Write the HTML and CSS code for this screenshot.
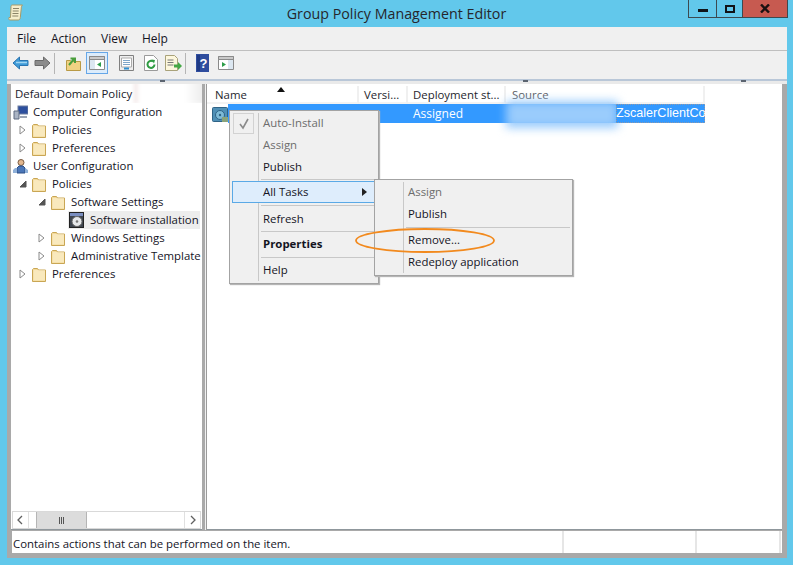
FILE: index.html
```html
<!DOCTYPE html>
<html lang="en">
<head>
<meta charset="utf-8">
<title>Group Policy Management Editor</title>
<link rel="stylesheet" href="styles.css">
</head>
<body>
<svg class="sprite" width="0" height="0" aria-hidden="true">
  <symbol id="folder" viewBox="0 0 14 15">
    <path d="M.5 14.500V2.500l1-1h4l1 1.500h7v11.500z" fill="#f3d998" stroke="#c9a654"/>
    <path d="M1.500 5h11.500v8.500H1.500z" fill="#f9e9bd"/>
    <path d="M1.500 4h11.500" stroke="#fff7df"/>
  </symbol>
  <symbol id="open" viewBox="0 0 8 10"><path d="M1 1l5 4-5 4z" fill="#fff" stroke="#8a8a8a"/></symbol>
  <symbol id="expanded" viewBox="0 0 8 10"><path d="M7 2v6H1z" fill="#555" stroke="#555"/></symbol>
</svg>
<div class="titlebar">
  <svg class="app-icon" width="16" height="17" viewBox="0 0 16 17"><path d="M3 2.500C3 1 4 1 5 1h9.500c-1 1-1.200 2-1.200 3l-1 9.500c0 1.500-1 2.500-2 2.500H2C1 16 .5 15 1 13.500h1.500z" fill="#f5eecb" stroke="#a89a66"/><path d="M5 4.500h6M4.700 7h6M4.500 9.500h6M4.300 12h6" stroke="#8a8468"/></svg>
  <div class="title">Group Policy Management Editor</div>
  <div class="caption">
    <div class="cap cap-min"><span class="min-glyph"></span></div>
    <div class="cap cap-max"><span class="max-glyph"></span></div>
    <div class="cap cap-close">
      <svg width="10" height="9" viewBox="0 0 10 9"><path d="M1 .5l8 8M9 .5l-8 8" stroke="#1b1111" stroke-width="2.400"/></svg>
    </div>
  </div>
</div>
<div class="frame">
  <div class="menubar">
    <span class="menu-file">File</span><span class="menu-action">Action</span><span class="menu-view">View</span><span>Help</span>
  </div>
  <div class="toolbar">
    <svg class="tb tb-back" width="17" height="14" viewBox="0 0 17 14"><path d="M1 7l6.500-6v3.500H16v5H7.500V13z" fill="#3f9bd8" stroke="#2a74b0"/><path d="M4 6.500h11" stroke="#9fd4f2" stroke-width="1.500"/></svg>
    <svg class="tb tb-fwd" width="17" height="14" viewBox="0 0 17 14"><path d="M16 7L9.500 1v3.500H1v5h8.500V13z" fill="#8c8c8c" stroke="#6a6a6a"/></svg>
    <span class="tb-sep tb-sep1"></span>
    <svg class="tb tb-up" width="15" height="15" viewBox="0 0 15 15"><path d="M.5 14.500V4.500h4l1 1h9v9z" fill="#f0d283" stroke="#b99a45"/><path d="M3 9l5-6M4.500 2.500H9V7" fill="none" stroke="#4a9e3c" stroke-width="2"/></svg>
    <span class="tb-active">
      <svg width="16" height="14" viewBox="0 0 16 14"><path d="M.5.500h15v13H.5z" fill="#fff" stroke="#8a8a8a"/><path d="M.5.500h15v3H.5z" fill="#c9c9c9" stroke="#8a8a8a"/><path d="M1 4h5v9H1z" fill="#dce7f1"/><path d="M12 6v5L8 8.500z" fill="#2d9d4a"/></svg>
    </span>
    <svg class="tb tb-props" width="15" height="16" viewBox="0 0 15 16"><path d="M.5.500h14v15H.5z" fill="#eee" stroke="#808080"/><path d="M2.500 3h10v9h-10z" fill="#fff" stroke="#aaa"/><path d="M4 5.500h7M4 7.500h7M4 9.500h7" stroke="#7fa6c9"/><path d="M5 13.500h5" stroke="#2f8fd0" stroke-width="2"/></svg>
    <svg class="tb tb-refresh" width="14" height="16" viewBox="0 0 14 16"><path d="M.5.500h9l4 4v11H.5z" fill="#fff" stroke="#9a9a9a"/><path d="M10.500 9.500a3.500 3.500 0 1 1-1.500-3" fill="none" stroke="#2f9c43" stroke-width="2"/><path d="M7.500 4.500l3.500.5-1 3.500z" fill="#2f9c43"/></svg>
    <svg class="tb tb-export" width="17" height="16" viewBox="0 0 17 16"><path d="M.5.500h9l3 3v12H.5z" fill="#fdf7dd" stroke="#a9a27a"/><path d="M2.500 5h6M2.500 7.500h6M2.500 10h6" stroke="#777"/><path d="M9 9.500h4V7l4 4-4 4v-2.500H9z" fill="#45a845"/></svg>
    <span class="tb-sep tb-sep2"></span>
    <svg class="tb tb-help" width="13" height="18" viewBox="0 0 13 18"><rect width="13" height="18" fill="#2f4d9e"/><rect x="1" y="1" width="3" height="16" fill="#1f3a85"/><text x="7.500" y="13.500" class="help-q">?</text></svg>
    <svg class="tb tb-panel" width="16" height="14" viewBox="0 0 16 14"><path d="M.5.500h15v13H.5z" fill="#fff" stroke="#8a8a8a"/><path d="M.5.500h15v3H.5z" fill="#c9c9c9" stroke="#8a8a8a"/><path d="M10 4h5v9h-5z" fill="#dce7f1"/><path d="M4 6v5l4-2.500z" fill="#2d9d4a"/></svg>
  </div>
  <div class="main">
    <span class="tick tick-a"></span><span class="tick tick-b"></span><span class="tick tick-c"></span>
    <section class="pane tree-pane">
      <div class="tree-head">Default Domain Policy<span class="blur-tree"></span></div>
      <div class="tree">
        <div class="row d0">
          <svg class="ico-root" width="15" height="15" viewBox="0 0 15 15"><rect x="5" y="1" width="10" height="8" fill="#2c4f9e" stroke="#6f7f9f"/><path d="M1 6h5v8H1z" fill="#aab4c4" stroke="#5f6b80"/><path d="M7 11h7v2H7z" fill="#9aa4b4"/></svg>
          <span>Computer Configuration</span>
        </div>
        <div class="row d1"><svg class="arrow"><use href="#open"/></svg><svg class="folder"><use href="#folder"/></svg><span>Policies</span></div>
        <div class="row d1"><svg class="arrow"><use href="#open"/></svg><svg class="folder"><use href="#folder"/></svg><span>Preferences</span></div>
        <div class="row d0">
          <svg class="ico-root" width="15" height="15" viewBox="0 0 15 15"><circle cx="8" cy="3.500" r="3" fill="#e2b78e" stroke="#7a5a40"/><path d="M4 14V9l2-2h4l2 2v5z" fill="#4a76b8" stroke="#2c4f85"/><path d="M0 14v-3l2-2h2v5z" fill="#8fb0d8"/><path d="M12 14V9l3 2v3z" fill="#8fb0d8"/></svg>
          <span>User Configuration</span>
        </div>
        <div class="row d1"><svg class="arrow"><use href="#expanded"/></svg><svg class="folder"><use href="#folder"/></svg><span>Policies</span></div>
        <div class="row d2"><svg class="arrow"><use href="#expanded"/></svg><svg class="folder"><use href="#folder"/></svg><span>Software Settings</span></div>
        <div class="row d3 current">
          <svg class="ico-si" width="16" height="16" viewBox="0 0 16 16"><rect x=".5" y=".5" width="14" height="15" fill="#3f4650" stroke="#222"/><rect x="1" y="1" width="13" height="3" fill="#7a8ec0"/><circle cx="8" cy="9.500" r="5" fill="#e6e8ea" stroke="#666"/><circle cx="8" cy="9.500" r="1.300" fill="#777"/></svg>
          <span>Software installation</span>
        </div>
        <div class="row d2"><svg class="arrow"><use href="#open"/></svg><svg class="folder"><use href="#folder"/></svg><span>Windows Settings</span></div>
        <div class="row d2"><svg class="arrow"><use href="#open"/></svg><svg class="folder"><use href="#folder"/></svg><span>Administrative Template</span></div>
        <div class="row d1"><svg class="arrow"><use href="#open"/></svg><svg class="folder"><use href="#folder"/></svg><span>Preferences</span></div>
      </div>
      <div class="scrollbar">
        <svg class="sb-arrow" width="15" height="16" viewBox="0 0 15 16"><path d="M9 4L5 8l4 4" fill="none" stroke="#606060" stroke-width="1.300"/></svg>
        <div class="sb-track"><div class="sb-thumb"><span></span><span></span><span></span></div></div>
        <svg class="sb-arrow" width="15" height="16" viewBox="0 0 15 16"><path d="M6 4l4 4-4 4" fill="none" stroke="#606060" stroke-width="1.300"/></svg>
      </div>
    </section>
    <section class="pane list-pane">
      <div class="list-head">
        <div class="col col-name">Name<span class="sort"></span></div>
        <div class="col col-ver">Versi...</div>
        <div class="col col-dep">Deployment st...</div>
        <div class="col col-src">Source</div>
      </div>
      <div class="list-row">
        <svg class="pkg" width="16" height="16" viewBox="0 0 16 16"><rect x=".5" y="1.500" width="15" height="14" rx="1" fill="#4f8fb5" stroke="#2f6386"/><circle cx="8" cy="9" r="4.500" fill="#7dbad6" stroke="#2f6386"/><circle cx="8" cy="9" r="1.200" fill="#2f6386"/><rect x="10" y="11" width="6" height="5" fill="#8aa37a"/></svg>
        <div class="selection">
          <span class="sel-dep">Assigned</span>
          <span class="sel-blur"></span>
          <span class="sel-src">ZscalerClientCo</span>
        </div>
      </div>
    </section>
  </div>
  <div class="status">
    <div class="st st-main">Contains actions that can be performed on the item.</div>
    <div class="st st-mid"></div>
    <div class="st st-end"></div>
  </div>
</div>

<div class="ctx ctx-main">
  <span class="gutter"></span>
  <span class="check"><svg width="12" height="13" viewBox="0 0 12 13"><path d="M2 7l3 4 5-9" fill="none" stroke="#8a8a8a" stroke-width="1.600"/></svg></span>
  <div class="item off">Auto-Install</div>
  <div class="item off">Assign</div>
  <div class="item">Publish</div>
  <div class="sep"></div>
  <div class="item hot">All Tasks<span class="sub-arrow"></span></div>
  <div class="sep sep-wide sep-after-hot"></div>
  <div class="item">Refresh</div>
  <div class="sep"></div>
  <div class="item bold">Properties</div>
  <div class="sep sep-wide"></div>
  <div class="item">Help</div>
</div>
<div class="ctx ctx-sub">
  <span class="gutter"></span>
  <div class="item off">Assign</div>
  <div class="item">Publish</div>
  <div class="sep sep-wide"></div>
  <div class="item">Remove...</div>
  <div class="item">Redeploy application</div>
</div>
<svg class="callout" width="143" height="29" viewBox="0 0 143 29"><ellipse cx="71" cy="14.500" rx="69" ry="11.500" fill="none" stroke="#f28a1e" stroke-width="1.800"/></svg>
</body>
</html>
```
FILE: styles.css
```css
* { box-sizing: border-box; }
html, body { margin: 0; height: 100%; }
body {
  width: 793px;
  height: 565px;
  overflow: hidden;
  position: relative;
  background: #62c8eb;
  font: 11.400px/18px "Open Sans", "Noto Sans", sans-serif;
  color: #14141f;
  display: flex;
  flex-direction: column;
}
.sprite { position: absolute; }

.titlebar {
  height: 27px;
  display: flex;
  align-items: flex-start;
  flex: none;
  padding-left: 8px;
  position: relative;
}
.app-icon { margin-top: 4px; flex: none; }
.title {
  flex: 1;
  text-align: center;
  font-size: 14.250px;
  line-height: 27px;
  color: #26262c;
  padding-left: 81px;
}
.caption { display: flex; margin-right: 5px; height: 18px; border: 1px solid #3c4a50; border-top: 0; flex: none; }
.cap { display: flex; align-items: center; justify-content: center; height: 100%; }
.cap-min { width: 28px; border-right: 1px solid #3c4a50; }
.cap-max { width: 26px; border-right: 1px solid #3c4a50; }
.cap-close { width: 44px; background: #c75a50; }
.min-glyph { width: 10px; height: 3px; background: #101418; margin-top: 4px; }
.max-glyph { width: 10px; height: 8px; border: 2px solid #101418; }

.frame {
  flex: none;
  margin-left: 7px;
  width: 780px;
  height: 531px;
  background: #a9a9a9;
  display: flex;
  flex-direction: column;
}
.menubar {
  height: 24px;
  flex: none;
  background: #f0f0f0;
  border-bottom: 1px solid #bfbfbf;
  padding-left: 10px;
  display: flex;
  align-items: center;
  font-size: 12px;
}
.menubar span { display: block; }
.menu-file { width: 34px; }
.menu-action { width: 50px; }
.menu-view { width: 41px; }

.toolbar {
  height: 28px;
  flex: none;
  background: #f0f0f0;
  padding: 0 0 4px 5px;
  display: flex;
  align-items: center;
}
.tb { flex: none; display: block; }
.tb-fwd { margin-left: 5px; }
.tb-sep { width: 1px; height: 21px; background: #b5b5b5; flex: none; }
.tb-sep1 { margin-left: 3px; }
.tb-up { margin-left: 11px; }
.tb-active {
  width: 22px;
  height: 22px;
  margin-left: 5px;
  border: 1px solid #66a7e8;
  background: #dcecfb;
  display: flex;
  align-items: center;
  justify-content: center;
  flex: none;
}
.tb-props { margin-left: 11px; }
.tb-refresh { margin-left: 10px; }
.tb-export { margin-left: 7px; }
.tb-sep2 { margin-left: 3px; }
.tb-help { margin-left: 10px; }
.tb-panel { margin-left: 9px; }
.help-q { font: bold 13px "Liberation Sans", sans-serif; fill: #fff; text-anchor: middle; }

.main {
  flex: 1;
  min-height: 0;
  position: relative;
  display: flex;
  gap: 5px;
  padding: 5px 5px 0 4px;
  background: linear-gradient(#b9c7d8 0 2px, #eaeaea 2px 5px, #a9a9a9 5px);
}
.tick { position: absolute; top: 1px; width: 5px; height: 2px; background: #5b6470; }
.tick-a { left: 153px; }
.tick-b { left: 516px; }
.tick-c { left: 734px; }

.pane {
  background: #fff;
  display: flex;
  flex-direction: column;
  border-bottom: 1px solid #8f979c;
}
.tree-pane { width: 191px; flex: none; }
.list-pane { flex: 1; min-width: 0; box-shadow: -1px 0 0 #9a9a9a, -2px 0 0 #f0f0f0; }

.tree-head {
  height: 19px;
  line-height: 20px;
  padding-left: 4px;
  position: relative;
  flex: none;
  color: #20202a;
  overflow: hidden;
}
.blur-tree {
  position: absolute;
  left: 124px;
  top: -4px;
  width: 72px;
  height: 24px;
  background: linear-gradient(90deg, #e8d4d4 0 2px, #fff 2px 50px, #e9e9e9);
  filter: blur(2px);
}
.tree { flex: 1; min-height: 0; overflow: hidden; }
.row { height: 18px; display: flex; align-items: center; white-space: nowrap; overflow: hidden; }
.row svg { flex: none; }
.arrow { width: 8px; height: 10px; margin-right: 5px; }
.folder { width: 14px; height: 15px; margin-right: 6px; }
.d0 { padding-left: 2px; }
.d1 { padding-left: 8px; }
.d2 { padding-left: 27px; }
.d3 { padding-left: 58px; }
.ico-root { margin-right: 5px; }
.ico-si { margin-right: 5px; }
.current { position: relative; }
.current::before {
  content: "";
  position: absolute;
  left: 57px;
  right: 2px;
  top: 0;
  bottom: 0;
  background: #ededed;
  z-index: 0;
}
.current > * { position: relative; z-index: 1; }

.scrollbar {
  height: 18px;
  flex: none;
  margin: 0 1px;
  display: flex;
  align-items: center;
  border: 1px solid #d9d9d9;
  background: #fff;
}
.sb-arrow { flex: none; }
.sb-track { flex: 1; height: 100%; padding-left: 7px; border-left: 1px solid #e0e0e0; border-right: 1px solid #e0e0e0; }
.sb-thumb {
  width: 51px;
  height: 100%;
  background: #dcdcdc;
  border-left: 1px solid #b5b5b5;
  border-right: 1px solid #b5b5b5;
  display: flex;
  align-items: center;
  justify-content: center;
  gap: 1px;
}
.sb-thumb span { width: 1px; height: 7px; background: #555; }

.list-head { height: 20px; flex: none; display: flex; padding-top: 2px; }
.col {
  height: 18px;
  line-height: 17px;
  padding-left: 5px;
  border-right: 2px solid #f0f0f0;
  border-bottom: 2px solid #f3f3f3;
  position: relative;
  color: #26262e;
  white-space: nowrap;
}
.col-name { width: 152px; padding-left: 8px; }
.col-ver { width: 49px; }
.col-dep { width: 98px; }
.col-src { width: 199px; padding-left: 6px; color: #5a5a60; }
.sort {
  position: absolute;
  left: 70px;
  top: 1px;
  border: 4px solid transparent;
  border-top: 0;
  border-bottom: 5px solid #111;
}
.list-row { height: 20px; display: flex; position: relative; padding-left: 5px; }
.pkg { margin-top: 2px; flex: none; }
.selection {
  width: 477px;
  height: 19px;
  background: #3399ff;
  color: #fff;
  position: relative;
  line-height: 20px;
  padding-left: 185px;
  font-size: 12px;
}
.sel-blur {
  position: absolute;
  left: 278px;
  top: -3px;
  width: 112px;
  height: 27px;
  background: #9accfc;
  filter: blur(5px);
}
.sel-src {
  position: absolute;
  left: 388px;
  top: 0;
  width: 89px;
  height: 19px;
  background: #3399ff;
  font: 12.600px/19px "Liberation Sans", sans-serif;
  white-space: nowrap;
  outline: 1px dotted rgba(232, 154, 90, 0.5);
  outline-offset: -1px;
}

.status {
  height: 22px;
  flex: none;
  margin: 1px 5px 5px 5px;
  background: #fff;
  display: flex;
}
.st { border-right: 2px solid #e6e6e6; line-height: 25px; padding-left: 1px; }
.st-main { width: 552px; }
.st-mid { width: 133px; }
.st-end { width: 84px; }

.ctx {
  position: absolute;
  background: #f0f0f0;
  border: 1px solid #a3a3a3;
  box-shadow: 1px 1px 1px #b5b5b5;
  padding: 1px 2px 0;
  line-height: 22px;
}
.ctx-main { left: 229px; top: 110px; width: 150px; height: 174px; }
.ctx-sub { left: 374px; top: 179px; width: 199px; height: 97px; }
.gutter { position: absolute; top: 2px; bottom: 2px; width: 1px; background: #c8c8c8; }
.ctx-main .gutter { left: 28px; }
.ctx-sub .gutter { left: 28px; }
.check {
  position: absolute;
  left: 3px;
  top: 2px;
  width: 21px;
  height: 21px;
  border: 1px solid #d2d2d2;
  display: flex;
  align-items: center;
  justify-content: center;
}
.item { height: 22px; padding-left: 31px; position: relative; white-space: nowrap; }
.off { color: #6d6d6d; }
.bold { font-weight: 700; }
.hot {
  background: #deedfc;
  border: 1px solid #5aa9e6;
  line-height: 20px;
  padding-left: 30px;
  margin-right: -6px;
}
.sub-arrow {
  position: absolute;
  right: 14px;
  top: 6px;
  border: 4px solid transparent;
  border-right: 0;
  border-left: 5px solid #222;
}
.sep { height: 3px; margin-left: 29px; position: relative; }
.sep::after { content: ""; position: absolute; left: 0; right: 0; top: 1px; height: 1px; background: #c8c8c8; }
.sep-wide { height: 4px; }
.sep-wide::after { top: 2px; }
.sep-after-hot { height: 5px; }
.callout { position: absolute; left: 354px; top: 226px; }
```
